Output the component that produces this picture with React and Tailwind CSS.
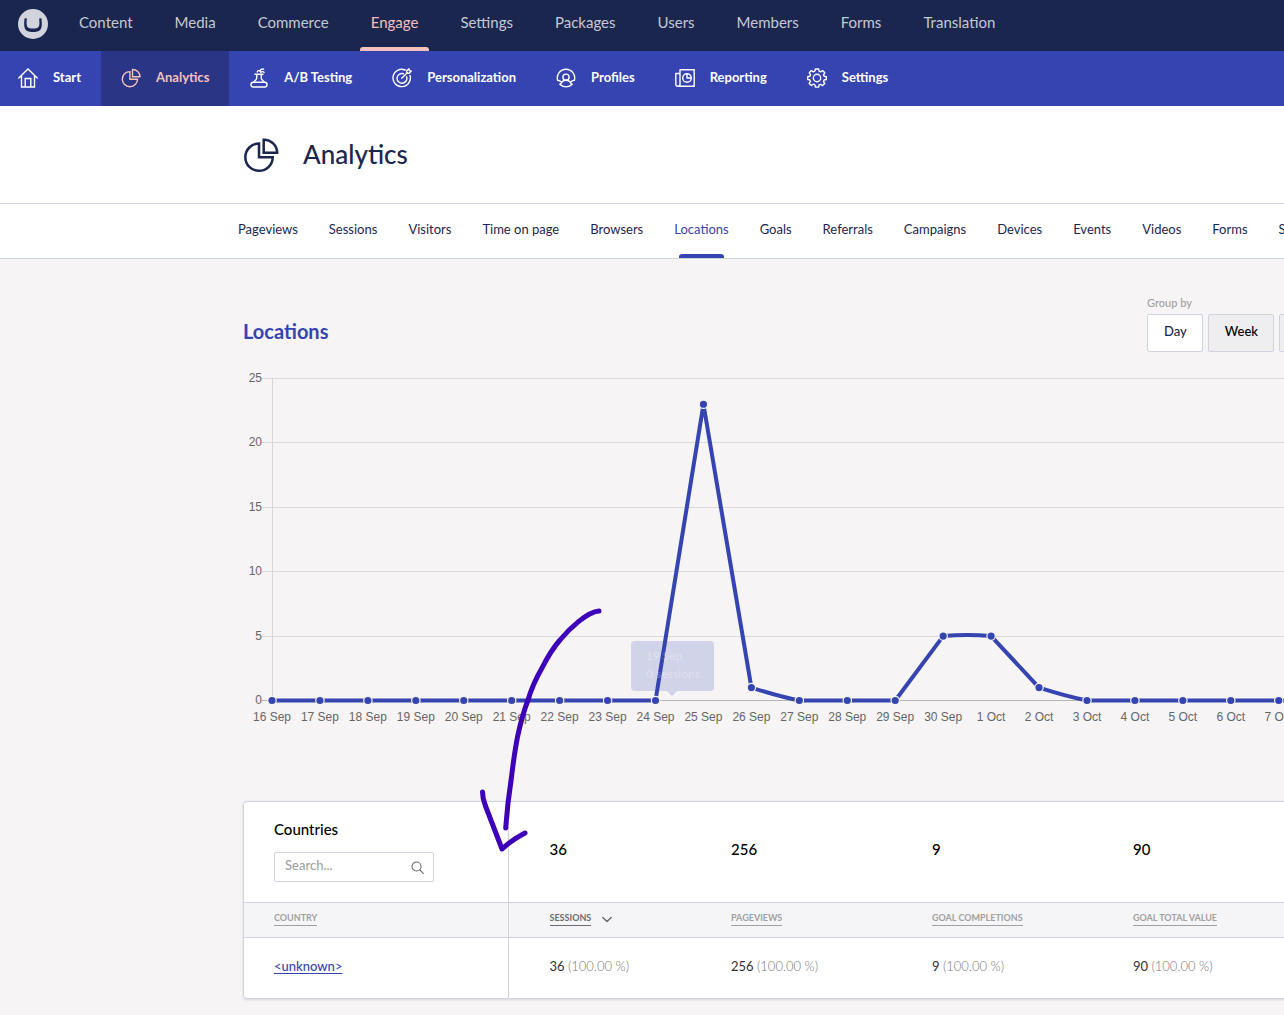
import React from "react";

const mainNav = ["Content", "Media", "Commerce", "Engage", "Settings", "Packages", "Users", "Members", "Forms", "Translation"];

function Icon({ size = "size-5", children, box = "0 0 20 20", width = 1.4 }) {
  return (
    <svg className={`${size} shrink-0`} viewBox={box} fill="none" stroke="currentColor" strokeWidth={width} strokeLinejoin="round" strokeLinecap="round" aria-hidden="true">
      {children}
    </svg>
  );
}

const HomeIcon = () => (
  <Icon>
    <path strokeLinejoin="miter" d="M.8 10 10 1l9.200 9M3.500 8v11h13V8M7.200 19v-8.500h5.600V19" />
  </Icon>
);

const PieIcon = ({ size, width = 1.4 }) => (
  <Icon size={size} width={width}>
    <path strokeLinejoin="miter" d="M8.900 3.600a7.600 7.600 0 1 0 7.600 7.600H8.900z" />
    <path strokeLinejoin="miter" d="M11.500 1.500v7.200H19a7.400 7.400 0 0 0-7.500-7.200z" />
  </Icon>
);

const FlaskIcon = () => (
  <Icon>
    <rect x="2" y="14.300" width="16" height="4.700" rx="2.300" />
    <path d="M4.700 14.300c.8-1.800 3-2.300 3-4.100V6.200M15.300 14.300c-.8-1.800-3-2.300-3-4.100V6.200M6 6.200h8M8.300 3.800c.4-1.500 1.800-1.500 2.700-.5.300-1.600 2-2.700 3.600-2.100M11.800 4.200c1-.9 2.600-.8 3.200.2" />
  </Icon>
);

const TargetIcon = () => (
  <Icon>
    <path d="M13.200 2A8.700 8.700 0 1 0 18 7.400M11.500 5.700a4.900 4.900 0 1 0 3.100 3.100M9.700 10.300l5.600-5.600M14.700 5.300V2.800L17 .8l.4 1.800 1.800.4-2 2.300z" />
  </Icon>
);

const ProfileIcon = () => (
  <Icon>
    <path d="M1.600 12.200a8.700 8.700 0 1 1 16.800 0" />
    <circle cx="10" cy="9.200" r="3.100" />
    <path d="M1.600 12.200c1.700.1 3 .9 4 2.200.8-1.400 2-2.100 4.400-2.100s3.600.7 4.400 2.100c1-1.300 2.300-2.100 4-2.200M3.800 16.300c.8-.3 1.400-.9 1.800-1.900M16.200 16.300c-.8-.3-1.400-.9-1.800-1.900M3.800 16.300a8.700 8.700 0 0 0 12.400 0" />
  </Icon>
);

const ReportIcon = () => (
  <Icon>
    <path strokeLinejoin="miter" d="M5 1.700h14.200v16.600H2.800a2 2 0 0 1-2-2V5.500H5M5 1.700v14.600a2 2 0 0 1-2 2" />
    <circle cx="12" cy="10" r="4.300" />
    <path d="M12 5.700V10h4.300" />
  </Icon>
);

const GearIcon = () => (
  <Icon>
    <circle cx="10" cy="10" r="3.700" />
    <path d="M8.400 1h3.200l.5 2.200 1.500.6 2-1.200 2.200 2.200-1.300 2 .6 1.500 2.200.4v2.800l-2.200.5-.6 1.500 1.300 2-2.200 2.100-2-1.300-1.500.6-.5 2.200H8.400l-.5-2.300-1.500-.6-2 1.300-2.200-2.100 1.300-2-.6-1.500-2.200-.4V8.700l2.200-.4.6-1.600-1.300-2 2.200-2.100 2 1.200 1.500-.6z" />
  </Icon>
);

const sections = [
  ["Start", HomeIcon],
  ["Analytics", PieIcon],
  ["A/B Testing", FlaskIcon],
  ["Personalization", TargetIcon],
  ["Profiles", ProfileIcon],
  ["Reporting", ReportIcon],
  ["Settings", GearIcon],
];

const tabs = ["Pageviews", "Sessions", "Visitors", "Time on page", "Browsers", "Locations", "Goals", "Referrals", "Campaigns", "Devices", "Events", "Videos", "Forms", "Scroll depth"];

const points = [
  ["16 Sep", 0], ["17 Sep", 0], ["18 Sep", 0], ["19 Sep", 0], ["20 Sep", 0], ["21 Sep", 0], ["22 Sep", 0], ["23 Sep", 0], ["24 Sep", 0],
  ["25 Sep", 23], ["26 Sep", 1], ["27 Sep", 0], ["28 Sep", 0], ["29 Sep", 0], ["30 Sep", 5], ["1 Oct", 5], ["2 Oct", 1], ["3 Oct", 0],
  ["4 Oct", 0], ["5 Oct", 0], ["6 Oct", 0], ["7 Oct", 0], ["8 Oct", 0],
];
const px = (i) => 29 + i * 47.94;
const py = (v) => 332.5 - v * 12.88;

function Chart() {
  const line = points.map(([, v], i) => {
    if (i === 0) return `M${px(i)} ${py(v)}`;
    if (i === 15) return `Q${(px(14) + px(15)) / 2} ${py(5) - 2} ${px(i)} ${py(v)}`;
    if (i === 11 || i === 17) return `Q${px(i) - 20} ${py(0) - 4} ${px(i)} ${py(v)}`;
    return `L${px(i)} ${py(v)}`;
  }).join("");
  return (
    <svg className="block h-[370px] w-[1083px] font-['Liberation_Sans'] text-[12px]" viewBox="0 0 1083 370" role="img" aria-label="Sessions per day">
      {[0, 5, 10, 15, 20, 25].map((v) => (
        <g key={v}>
          <line x1="19" x2="1083" y1={Math.floor(py(v)) + 0.5} y2={Math.floor(py(v)) + 0.5} stroke={v === 0 ? "#b4b4b6" : "#dadadc"} />
          <text x="19" y={Math.ceil(py(v)) + 3} textAnchor="end" fill="#666">{v}</text>
        </g>
      ))}
      <line x1="29.500" x2="29.500" y1="10" y2="333" stroke="#d6d6d8" />
      <path d={line} fill="none" stroke="#3544b1" strokeWidth="4" strokeLinejoin="round" />
      {points.map(([d, v], i) => (
        <g key={d}>
          <circle cx={px(i)} cy={py(v)} r="4.200" fill="#3544b1" stroke="#f6f4f5" strokeWidth="1.200" />
          <text x={px(i)} y="353" textAnchor="middle" fill="#666">{d}</text>
        </g>
      ))}
    </svg>
  );
}

const columns = [
  ["Sessions", "36", "pl-[41px]"],
  ["Pageviews", "256", ""],
  ["Goal completions", "9", ""],
  ["Goal total value", "90", ""],
];

export default function App() {
  return (
    <div className="min-h-screen overflow-hidden bg-[#f6f4f5] font-[Lato,sans-serif] text-[#1b264f]">
      <header className="flex h-[51px] items-start bg-[#1b264f] pl-[18px]">
        <a href="#home" aria-label="Umbraco" className="mt-[9px] shrink-0">
          <svg className="block size-[30px]" viewBox="0 0 30 30" aria-hidden="true">
            <circle cx="15" cy="15" r="15" fill="#d1d4dc" />
            <path d="M6.600 9.200C5.800 14.800 6 18.900 7.800 20.900c1.500 1.600 4.200 2 7.200 2s5.700-.4 7.200-2c1.800-2 2-6.100 1.200-11.700l-2.300.3c.6 4.500.5 7.300-.8 8.800-.8.900-2.500 1.200-5.300 1.200s-4.500-.3-5.300-1.200c-1.300-1.500-1.400-4.300-.8-8.800z" fill="#1b264f" />
          </svg>
        </a>
        <nav className="flex h-full pl-[10px]">
          {mainNav.map((n) => (
            <a key={n} href={`#${n}`} className={`relative flex px-[21px] pt-3 text-[15px] leading-5 ${n === "Engage" ? "text-[#f5c1bc]" : "text-[#c6c9d3]"}`}>
              {n}
              {n === "Engage" && <span className="absolute inset-x-[10px] bottom-0 h-1 rounded-t-[3px] bg-[#f5c1bc]" />}
            </a>
          ))}
        </nav>
      </header>

      <nav className="flex h-[55px] bg-[#3544b1] text-[13px] font-bold text-white">
        {sections.map(([n, I]) => (
          <a key={n} href={`#${n}`} className={`flex items-center gap-[15px] pr-5 pb-0.5 ${n === "Start" ? "pl-[18px]" : "pl-5"} ${n === "Analytics" ? "bg-[#2a3585] text-[#f5c1bc]" : ""}`}>
            <I />
            {n}
          </a>
        ))}
      </nav>

      <div className="flex h-[98px] items-center gap-6 border-b border-[#d0d2de] bg-white pl-[243px]">
        <PieIcon size="size-9" width={1.4} />
        <h1 className="pb-0.5 text-[26px] leading-8 font-medium">Analytics</h1>
      </div>

      <nav className="flex h-[55px] gap-[31px] border-b border-[#d0d2de] bg-white pl-[238px] text-[13px]">
        {tabs.map((t) => (
          <a key={t} href={`#${t}`} className={`relative shrink-0 pt-[15px] leading-5 whitespace-nowrap ${t === "Locations" ? "text-[#3544b1]" : ""}`}>
            {t}
            {t === "Locations" && <span className="absolute inset-x-[5px] bottom-0 h-1 rounded-t-[3px] bg-[#3544b1]" />}
          </a>
        ))}
      </nav>

      <main className="pl-[243px]">
        <div className="flex h-[109px] pt-[36px]">
          <h2 className="w-[904px] shrink-0 pt-[22px] text-[20px] leading-7 font-bold text-[#3544b1]">Locations</h2>
          <div role="group" aria-label="Group by" className="shrink-0">
            <p className="text-[11px] leading-4 font-medium text-[#a1a1a1]">Group by</p>
            <div className="mt-[3px] flex gap-[5px] text-[13px] font-medium text-black">
              {["Day", "Week", "Month"].map((b) => (
                <button key={b} type="button" className={`h-[38px] rounded-[2px] border border-[#d0d2de] pr-[15px] pb-0.5 pl-4 ${b === "Day" ? "bg-white text-[#1b264f]" : "bg-[#eeeef1]"}`}>
                  {b}
                </button>
              ))}
            </div>
          </div>
        </div>

        <div className="relative">
          <Chart />
          <div className="absolute top-[273px] left-[388px] h-[50px] w-[83px] rounded-[4px] bg-[#3544b1]/19 pt-[6px] pl-[15px] text-[12px] leading-[18px] font-bold text-white/25">
            <p>19 Sep</p>
            <p>0 sessions</p>
            <span className="absolute top-full left-9 border-x-[5px] border-t-[5px] border-x-transparent border-t-[#3544b1]/19" />
          </div>
          <svg className="pointer-events-none absolute top-[235px] left-[230px] h-[255px] w-[135px]" viewBox="0 0 135 255" fill="none" stroke="#3d00b8" strokeWidth="5" strokeLinecap="round" strokeLinejoin="round" aria-hidden="true">
            <path d="M126 8C114 9 97 25 87 37 80 45 74 55 69 65 62 77 58 87 55 97 50 110 47 122 44.500 134 41.500 149 40 162 38.500 174 36 190 34 207 32.700 225M9.500 189c0 6 1 9 3 14l16.500 43c6-5 8-8 23-16" />
          </svg>
        </div>

        <section className="mt-[63px] w-[1100px] overflow-hidden rounded-[4px] border border-[#d0d2de] bg-white text-[13px] shadow-sm">
          <table className="w-full table-fixed border-collapse text-left">
            <colgroup>
              <col className="w-[264px]" />
              <col className="w-[223px]" />
              <col className="w-[201px]" />
              <col className="w-[201px]" />
              <col />
            </colgroup>
            <thead>
              <tr className="h-[100px] border-b border-[#d0d2de] text-[15px] font-medium text-black">
                <td className="border-r border-[#d0d2de] pl-[30px] align-top">
                  <label htmlFor="country-search" className="block pt-[17px] leading-5">Countries</label>
                  <div className="mt-[13px] flex h-[30px] w-40 items-center rounded-[2px] border border-[#d0d2de] bg-white pr-[9px] pl-[10px] text-[#666]">
                    <input id="country-search" type="text" placeholder="Search..." className="w-full min-w-0 pb-[3px] text-[13px] font-medium outline-none placeholder:text-[#a1a1a1]" />
                    <Icon size="size-[13px]" width={1.6}>
                      <circle cx="8.500" cy="8.500" r="7" />
                      <path d="m13.500 13.500 5.500 5.500" />
                    </Icon>
                  </div>
                </td>
                {columns.map(([n, v, p]) => (
                  <td key={n} className={`pb-[5px] ${p}`}>{v}</td>
                ))}
              </tr>
              <tr className="h-[35px] border-b border-[#d0d2de] bg-[#f5f5f7] text-[9px] leading-3 text-[#a1a1a1] uppercase">
                <th scope="col" className="border-r border-[#d0d2de] pb-0.5 pl-[30px] font-bold">
                  <button type="button" className="border-b border-current pb-px font-bold uppercase">Country</button>
                </th>
                {columns.map(([n, , p], i) => (
                  <th key={n} scope="col" className={`pb-0.5 ${p}`} aria-sort={i === 0 ? "descending" : undefined}>
                    <span className={`flex items-center gap-[11px] ${i === 0 ? "text-[#6b6b70]" : ""}`}>
                      <button type="button" className="border-b border-current pb-px font-bold uppercase">{n}</button>
                      {i === 0 && (
                        <Icon size="size-[10px]" box="0 0 10 10" width={1.5}>
                          <path d="m.8 3.500 4.200 4 4.200-4" />
                        </Icon>
                      )}
                    </span>
                  </th>
                ))}
              </tr>
            </thead>
            <tbody>
              <tr className="h-[61px]">
                <td className="border-r border-[#d0d2de] pb-0.5 pl-[30px]">
                  <a href="#unknown" className="font-medium text-[#3544b1] underline underline-offset-2">&lt;unknown&gt;</a>
                </td>
                {columns.map(([n, v, p]) => (
                  <td key={n} className={`pb-0.5 text-[#303033] ${p}`}>
                    {v} <span className="font-light text-[#77777b]">(100.00 %)</span>
                  </td>
                ))}
              </tr>
            </tbody>
          </table>
        </section>
      </main>
    </div>
  );
}
